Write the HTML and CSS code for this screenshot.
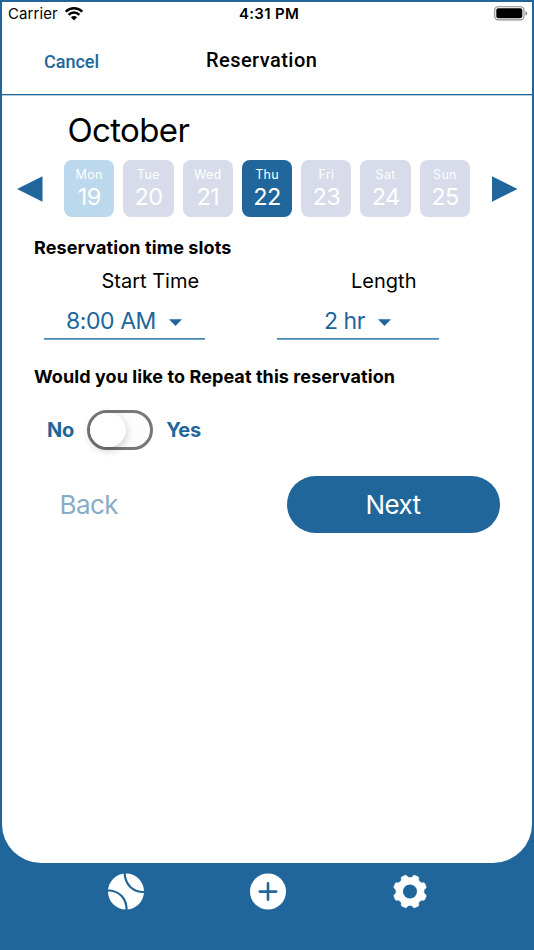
FILE: index.html
```html
<!DOCTYPE html>
<html lang="en">
<head>
<meta charset="utf-8">
<title>Reservation</title>
<link rel="stylesheet" href="styles.css">
</head>
<body>
<main class="screen">
  <div class="status">
    <div class="carrier"><span class="carrier-name">Carrier</span>
      <svg class="wifi" width="18" height="14" viewBox="0 0 18 14"><g fill="none" stroke="#000" stroke-width="2.4"><path d="M.8 4.700a11.600 11.600 0 0 1 16.400 0"/><path d="M3.600 7.800a7.600 7.600 0 0 1 10.800 0"/></g><path d="M9 13.400 5.900 10.200a4.400 4.400 0 0 1 6.200 0z"/></svg>
    </div>
    <span class="clock">4:31 PM</span>
    <svg class="battery" width="34" height="15" viewBox="0 0 34 15"><rect x=".7" y=".7" width="29.3" height="13.2" rx="3.6" fill="none" stroke="#8b8b8b" stroke-width="1.1"/><rect x="2.3" y="2.3" width="26" height="10" rx="2"/><path d="M31.4 5q1.8.7 1.8 2.3t-1.8 2.3z" fill="#8b8b8b"/></svg>
  </div>
  <header class="header">
    <a class="cancel">Cancel</a>
    <h1 class="title">Reservation</h1>
  </header>
  <h2 class="month">October</h2>
  <div class="week">
    <svg class="arrow" width="26" height="26" viewBox="0 0 26 26"><path d="M0 13 25.500 .2v25.600z"/></svg>
    <div class="days">
      <div class="day past"><span class="name">Mon</span><span class="date">19</span></div>
      <div class="day"><span class="name">Tue</span><span class="date">20</span></div>
      <div class="day"><span class="name">Wed</span><span class="date">21</span></div>
      <div class="day selected"><span class="name">Thu</span><span class="date">22</span></div>
      <div class="day"><span class="name">Fri</span><span class="date">23</span></div>
      <div class="day"><span class="name">Sat</span><span class="date">24</span></div>
      <div class="day"><span class="name">Sun</span><span class="date">25</span></div>
    </div>
    <svg class="arrow" width="26" height="26" viewBox="0 0 26 26"><path d="M25.500 13 0 .2v25.600z"/></svg>
  </div>
  <h3 class="label slots-label">Reservation time slots</h3>
  <div class="slots">
    <div class="slot start">
      <span class="slot-name">Start Time</span>
      <div class="select"><span class="value">8:00 AM</span><svg width="13" height="7" viewBox="0 0 13 7"><path d="M0 .2h13L6.5 7z"/></svg></div>
    </div>
    <div class="slot length">
      <span class="slot-name">Length</span>
      <div class="select"><span class="value">2 hr</span><svg width="13" height="7" viewBox="0 0 13 7"><path d="M0 .2h13L6.5 7z"/></svg></div>
    </div>
  </div>
  <h3 class="label repeat-label">Would you like to Repeat this reservation</h3>
  <div class="repeat">
    <span class="no">No</span>
    <div class="toggle"><div class="knob"></div></div>
    <span class="yes">Yes</span>
  </div>
  <div class="actions">
    <a class="back">Back</a>
    <a class="next">Next</a>
  </div>
</main>
<nav class="tabs">
  <svg width="36" height="37" viewBox="0 0 36 37"><circle cx="18" cy="18.5" r="18" fill="#fff"/><g fill="none" stroke="#20669a" stroke-width="2.2"><path d="M16.6 0C17 11.500 25 19.300 36 19"/><path d="M0 17.500C11 17.500 18.600 25 18.600 37"/></g></svg>
  <svg width="36" height="37" viewBox="0 0 36 37"><circle cx="18" cy="18.500" r="18" fill="#fff"/><path d="M18 10.400v16.400M9.800 18.600h16.400" stroke="#20669a" stroke-width="2.600" stroke-linecap="round"/></svg>
  <svg width="36" height="37" viewBox="0 0 36 37" id="gear"></svg>
</nav>
<script src="gear.js"></script>
</body>
</html>
```
FILE: styles.css
```css
* { box-sizing: border-box; }
body {
  margin: 0;
  width: 534px;
  height: 950px;
  overflow: hidden;
  background: #20669a;
  font-family: Inter, "Liberation Sans", sans-serif;
  color: #000;
}
h1, h2, h3 { margin: 0; }
svg { display: block; flex: none; }
span, a, h1, h2, h3 { white-space: nowrap; }
.screen {
  height: 861px;
  margin: 1.5px 2px 0 1.5px;
  background: #fff;
  border-radius: 0 0 39px 39px;
  overflow: hidden;
}
.status {
  height: 24px;
  display: grid;
  grid-template-columns: 1fr auto 1fr;
  align-items: center;
  padding: 0 4px 0 6.500px;
}
.carrier { display: flex; align-items: center; gap: 7px; }
.carrier-name { font-size: 15px; letter-spacing: .08px; }
.clock { font-size: 15px; font-weight: 600; letter-spacing: .3px; margin-left: 2px; }
.battery { justify-self: end; }
.header {
  height: 69px;
  border-bottom: 1px solid #20669a;
  box-shadow: 0 1px 0 #b5cde0;
  display: flex;
  font-family: Roboto, sans-serif;
  font-weight: 500;
}
.cancel { width: 162px; padding: 25px 0 0 42.500px; font-size: 18px; line-height: 22px; color: #20669a; }
.title { padding-top: 22px; margin-left: 42.500px; font-size: 20px; font-weight: 500; line-height: 24px; letter-spacing: .45px; }
.month { height: 65.500px; padding: 15.500px 0 0 66px; font-size: 33px; font-weight: 400; line-height: 40px; letter-spacing: -.65px; }
.week { height: 57px; display: flex; align-items: center; padding-left: 15px; gap: 21.500px; }
.days { display: grid; grid-template-columns: repeat(7, 50.300px); gap: 9px; }
.day {
  height: 57px;
  padding-top: 7px;
  border-radius: 8px;
  background: #d7dbea;
  color: #fff;
  display: flex;
  flex-direction: column;
  align-items: center;
}
.past { background: #bcd8ec; }
.selected { background: #20669a; }
.name { font-size: 12.500px; line-height: 15px; letter-spacing: .3px; }
.date { font-size: 23.500px; line-height: 30px; letter-spacing: -.6px; }
.arrow, .select { fill: #20669a; }
.label { padding-left: 32.500px; font-size: 18px; font-weight: 700; line-height: 24px; }
.slots-label { margin-top: 19px; letter-spacing: .1px; }
.slots { display: flex; gap: 72px; padding: 9px 0 0 42px; }
.slot { width: 161.500px; }
.slot-name { display: block; font-size: 20px; line-height: 24px; text-align: center; position: relative; left: 26px; }
.select {
  height: 46px;
  padding-top: 14px;
  border-bottom: 1px solid #4786b3;
  box-shadow: 0 1px 0 #77a6c8;
  display: flex;
  color: #20669a;
  font-size: 23px;
  line-height: 28px;
  letter-spacing: -.45px;
  gap: 13.500px;
  justify-content: center;
}
.select svg { margin-top: 12px; }
.repeat-label { margin-top: 26px; letter-spacing: .08px; }
.repeat { height: 42px; margin-top: 20px; padding-left: 45.500px; display: flex; align-items: center; color: #20669a; font-size: 20px; font-weight: 700; letter-spacing: -.2px; }
.toggle { width: 66px; height: 40px; margin: 0 13px; border: 3px solid #777; border-radius: 20px; background: #fcfcfc; }
.knob { width: 36px; height: 34px; border-radius: 18px; background: #fff; box-shadow: 0 3px 8px rgba(0,0,0,.22); }
.actions { height: 57px; margin-top: 25px; display: flex; align-items: center; padding-left: 58px; }
.back { width: 227px; color: #8aabc6; font-size: 26px; letter-spacing: -.6px; }
.next { width: 213px; height: 57px; border-radius: 28.500px; background: #20669a; color: #fff; font-size: 26px; line-height: 57px; text-align: center; letter-spacing: -.6px; }
.tabs { display: flex; padding: 10.500px 0 0 107.500px; gap: 106px; }
```
FILE: gear.js
```javascript
const svg = document.getElementById("gear");
const point = (angle, r) => (18 + r * Math.sin(angle)).toFixed(2) + " " + (18.5 + r * Math.cos(angle)).toFixed(2);
let path = "";
for (let i = 0; i < 8; i++) {
  const a = (i * Math.PI) / 4;
  const teeth = [[0, 13.9], [0.09, 14.1], [0.18, 15], [0.2, 16.1], [0.27, 16.8], [0.52, 16.8], [0.585, 16.1], [0.605, 15], [0.695, 14.1]];
  for (const [d, r] of teeth) path += (path ? "L" : "M") + point(a + d, r);
}
svg.innerHTML = `<path d="${path}Z" fill="#fff" stroke="#fff" stroke-width=".6" stroke-linejoin="round"/><circle cx="18" cy="18.5" r="7" fill="#20669a"/>`;
```
